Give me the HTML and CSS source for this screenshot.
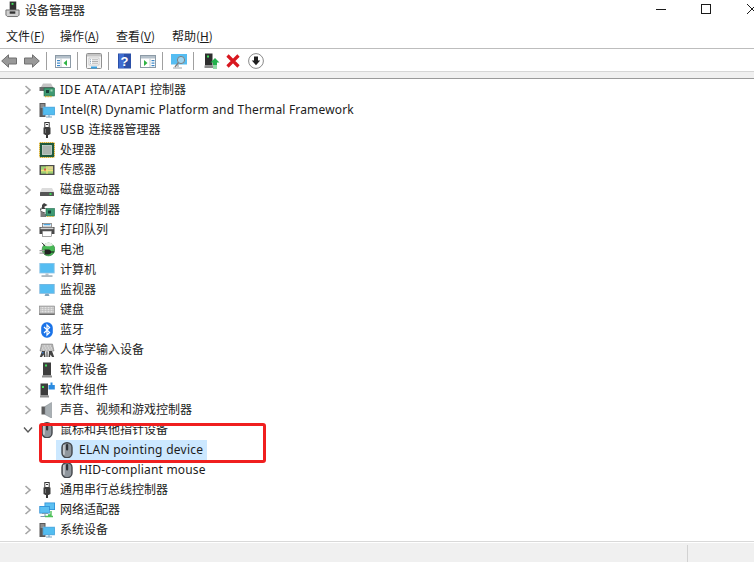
FILE: index.html
```html
<!DOCTYPE html>
<html lang="zh-CN">
<head>
<meta charset="utf-8">
<title>设备管理器</title>
<link rel="stylesheet" href="styles.css">
</head>
<body>
<svg class="defs" width="0" height="0" aria-hidden="true">
  <defs>
    <symbol id="i-chev" viewBox="0 0 8 10"><path d="M1.5 1 L6 5 L1.5 9" fill="none" stroke="#a6a6a6" stroke-width="1.6"/></symbol>
    <symbol id="i-chev-open" viewBox="0 0 10 8"><path d="M1 1.5 L5 6 L9 1.5" fill="none" stroke="#595959" stroke-width="1.4"/></symbol>
    <symbol id="i-ide" viewBox="0 0 16 16"><path d="M2 5 L4 1.5 H12 L14 5 Z" fill="#c4c4c4"/><rect x="0.5" y="5" width="14" height="4" fill="#6a6a6a"/><rect x="5" y="6" width="10.5" height="8" fill="#3e9a72" stroke="#1f6b4c" stroke-width=".6"/><rect x="7" y="8" width="3" height="3" fill="#17443a"/><rect x="11.5" y="7.5" width="2" height="2" fill="#a4d8b8"/><path d="M6 14.5 H13" stroke="#d8b030" stroke-width="1.4" stroke-dasharray="1 .6"/></symbol>
    <symbol id="i-sys" viewBox="0 0 16 16"><rect x="0.5" y="1" width="6" height="14" fill="#5a5a5a"/><rect x="1.5" y="2.5" width="4" height="1" fill="#bdbdbd"/><rect x="1.5" y="4.5" width="4" height="1" fill="#bdbdbd"/><rect x="4" y="5" width="12" height="8" fill="#3fa7e0" stroke="#7fbfe6" stroke-width=".6"/><rect x="5" y="6" width="10" height="6" fill="#52bdf0"/><path d="M7 15 H13 M10 13 V15" stroke="#7ba6c2" stroke-width="1.2"/></symbol>
    <symbol id="i-usb" viewBox="0 0 16 16"><rect x="5.8" y="0.5" width="4.4" height="5" fill="#fff" stroke="#3a3a3a"/><rect x="7" y="2" width="2" height="1" fill="#3a3a3a"/><path d="M4.5 5.5 H11.5 V12 L9.5 13 H6.5 L4.5 12 Z" fill="#3c3c3c"/><rect x="7" y="13" width="2" height="3" fill="#333"/><rect x="6" y="7" width="1" height="4" fill="#777"/></symbol>
    <symbol id="i-cpu" viewBox="0 0 16 16"><rect x="0.5" y="0.5" width="15" height="15" fill="#c9a531"/><rect x="1" y="1" width="14" height="14" fill="#1f5a3e"/><rect x="3.5" y="3.5" width="9" height="9" fill="#aab4af" stroke="#dfe4e1" stroke-width=".7"/><path d="M.5 1V15M15.5 1V15M1 .5H15M1 15.5H15" stroke="#d8b030" stroke-width="1" stroke-dasharray="1 1"/></symbol>
    <symbol id="i-sensor" viewBox="0 0 16 16"><rect x="0.5" y="3" width="15" height="10" fill="#4d4d4d"/><rect x="2" y="4.3" width="12" height="7.4" fill="#9fcf74"/><path d="M2 8.5 H14 M8 4.3 V11.7" stroke="#f2e27a" stroke-width="1.3"/><rect x="9" y="4.3" width="5" height="3.2" fill="#dfd28f"/><rect x="5" y="6.5" width="2" height="2" fill="#d9534f"/></symbol>
    <symbol id="i-disk" viewBox="0 0 16 16"><path d="M3 6 H13 L15 10 H1 Z" fill="#dcdcdc"/><rect x="1" y="10" width="14" height="4" rx=".5" fill="#555"/><rect x="10.5" y="11" width="2" height="2" fill="#39d353"/></symbol>
    <symbol id="i-storage" viewBox="0 0 16 16"><path d="M5 1 L8.5 3 L5 5 L7 7 H3 V3 Z M1 7 L3 5 L2 9 L7 11 H5 V14 H3 Z" fill="#404040"/><path d="M1.5 9 L7 12 V15 H1.5 Z" fill="#7a7a7a"/><rect x="7" y="6.5" width="8.5" height="7.5" fill="#3e9a72" stroke="#1f6b4c" stroke-width=".6"/><rect x="9" y="8.5" width="3" height="3" fill="#17443a"/><path d="M8 14.5 H15" stroke="#d8b030" stroke-width="1.2" stroke-dasharray="1 .6"/></symbol>
    <symbol id="i-printer" viewBox="0 0 16 16"><rect x="3.5" y="1.5" width="9" height="3.5" fill="#fff" stroke="#555" stroke-width=".6"/><path d="M4.5 2.7 H11.5" stroke="#3a9ad9" stroke-width="1.2"/><path d="M.5 5 H15.5 V12 H12.5 V9 H3.5 V12 H.5 Z" fill="#4a4a4a"/><rect x="1.5" y="5.6" width="13" height="1.6" fill="#d0d0d0"/><rect x="3.5" y="9" width="9" height="5.5" fill="#fff" stroke="#666" stroke-width=".6"/></symbol>
    <symbol id="i-battery" viewBox="0 0 16 16"><circle cx="9.5" cy="7.5" r="6.4" fill="#46b854" stroke="#2f7a3a" stroke-width=".6"/><path d="M4.5 3 C7 4.8 12 4.8 14.5 3 L12 1 H7 Z" fill="#e8efe7"/><path d="M3 .8 L6 4" stroke="#333" stroke-width="1"/><path d="M5.5 7.5 H9.5 A2.5 2.5 0 0 1 9.5 12.5 H5.5 Z" fill="#222"/><path d="M0.5 8.7 H5.5 M0.5 11.2 H5.5" stroke="#9a9a9a" stroke-width="1.2"/><path d="M11 10 H15" stroke="#222" stroke-width="1.2"/></symbol>
    <symbol id="i-computer" viewBox="0 0 16 16"><rect x="0.3" y="1" width="15.4" height="10.4" fill="#8fc6e8"/><rect x="1.2" y="1.8" width="13.6" height="8.8" fill="#55bdf2"/><rect x="6.5" y="11.4" width="3" height="2" fill="#b8c4cc"/><rect x="2.5" y="13.4" width="11" height="1.3" fill="#8a9aa6"/></symbol>
    <symbol id="i-monitor" viewBox="0 0 16 16"><rect x="0.3" y="2" width="15.4" height="9.8" fill="#7ab6dd"/><rect x="1.2" y="2.8" width="13.6" height="8.2" fill="#55bdf2"/><path d="M6.5 11.8 H9.5 L10.5 14 H5.5 Z" fill="#7fa3bb"/></symbol>
    <symbol id="i-keyboard" viewBox="0 0 16 16"><rect x="0.3" y="4" width="15.4" height="8.5" fill="#bcbcbc" stroke="#7c7c7c" stroke-width=".5"/><path d="M1.5 5.7 H14.5 M1.5 7.7 H14.5 M1.5 9.7 H14.5" stroke="#f0f0f0" stroke-width="1.1" stroke-dasharray="1 .5"/><rect x="0.3" y="11.6" width="15.4" height="1.2" fill="#5e5e5e"/></symbol>
    <symbol id="i-bt" viewBox="0 0 16 16"><rect x="2.2" y="0.3" width="11.6" height="15.4" rx="5.4" fill="#1a73e8"/><path d="M5 5 L10.6 10.4 L8 13 V3 L10.6 5.6 L5 11" fill="none" stroke="#fff" stroke-width="1.2"/></symbol>
    <symbol id="i-hid" viewBox="0 0 16 16"><path d="M2.5 2 H13.5 L15 9 H1 Z" fill="#b4b4b4" stroke="#6e6e6e" stroke-width=".5"/><path d="M3.5 4 H12.5 M3 6 H13 M2.5 8 H13.5" stroke="#f0f0f0" stroke-width="1" stroke-dasharray="1 .5"/><path d="M3 9 H6 L6.5 15 H5 L4.5 12.5 L3 15 H.8 Z" fill="#444"/><rect x="3" y="10" width="1.5" height="1.5" fill="#3a76c4"/><path d="M10 9 H13 L15.2 15 H13 L11.5 12.5 L11 15 H9.5 Z" fill="#444"/><rect x="7.2" y="9.5" width="1.6" height="5.5" fill="#7b7b7b"/></symbol>
    <symbol id="i-softdev" viewBox="0 0 16 16"><rect x="4" y="0.5" width="8" height="13" fill="#3d3d3d"/><rect x="6" y="2.5" width="2" height="2" fill="#3fe05a"/><rect x="3" y="13.5" width="10" height="2" fill="#8f8f8f"/></symbol>
    <symbol id="i-softcomp" viewBox="0 0 16 16"><rect x="1.5" y="1.5" width="7.5" height="12" fill="#3d3d3d"/><rect x="3" y="4" width="2" height="2" fill="#3fe05a"/><rect x="1" y="13.5" width="9" height="2" fill="#8f8f8f"/><path d="M9.5 3 H11.5 V.5 H13.5 V3 H15.8 V7.5 H9.5 Z" fill="#2b8be0"/></symbol>
    <symbol id="i-sound" viewBox="0 0 16 16"><rect x="2.5" y="4.5" width="4" height="8" fill="#5c5c5c"/><path d="M6 4.5 L12.5 .5 V16 L6 12.5 Z" fill="#a9b0b4" stroke="#7c8388" stroke-width=".5"/></symbol>
    <symbol id="i-mouse" viewBox="0 0 16 16"><rect x="3" y="0.7" width="10" height="15" rx="4.8" fill="#8f969d" stroke="#43474c" stroke-width="1.4"/><rect x="4.3" y="2.8" width="1.3" height="10" rx=".6" fill="#d7dadd"/><rect x="7" y="2" width="2.2" height="6.5" rx="1" fill="#2f3338"/></symbol>
    <symbol id="i-net" viewBox="0 0 16 16"><rect x="5.5" y="0.5" width="10.5" height="7.5" fill="#2d8fd5"/><rect x="6.3" y="1.3" width="8.9" height="5.9" fill="#5cc0f2"/><rect x="0.3" y="4" width="10.5" height="7.5" fill="#2d8fd5"/><rect x="1.1" y="4.8" width="8.9" height="5.9" fill="#5cc0f2"/><path d="M3 11.5 H9 M6 11.5 V14 M1.5 14.5 H10" stroke="#7a9cb2" stroke-width="1"/><path d="M12 9 V13 H9 M6 14.5 H14" stroke="#4fc05a" stroke-width="1.4" fill="none"/></symbol>
  </defs>
</svg>

<div class="window">
  <header class="titlebar">
    <svg class="title-icon" viewBox="0 0 16 18"><rect x="5" y="0.5" width="7" height="9" fill="#303030"/><rect x="7" y="2" width="2" height="2" fill="#3fe05a"/><path d="M1 9.5 H15 V15 L13.5 16.5 H2.5 L1 15 Z" fill="#cfcfcf" stroke="#6b6b6b"/><rect x="5" y="11" width="6" height="2.5" fill="#333"/></svg>
    <span class="title-text">设备管理器</span>
    <div class="controls">
      <svg class="ctl ctl-min" viewBox="0 0 10 10"><path d="M0 5.5 H10" stroke="#1a1a1a"/></svg>
      <svg class="ctl ctl-max" viewBox="0 0 10 10"><rect x=".5" y=".5" width="9" height="9" fill="none" stroke="#1a1a1a"/></svg>
      <svg class="ctl ctl-close" viewBox="0 0 10 10"><path d="M0 0 L10 10 M10 0 L0 10" stroke="#1a1a1a"/></svg>
    </div>
  </header>

  <nav class="menubar">
    <span class="menu">文件(<u>F</u>)</span>
    <span class="menu">操作(<u>A</u>)</span>
    <span class="menu">查看(<u>V</u>)</span>
    <span class="menu">帮助(<u>H</u>)</span>
  </nav>

  <div class="toolbar">
    <svg class="tb" viewBox="0 0 16 16"><path d="M.7 8 L7.5 1.8 V5 H15.5 V11 H7.5 V14.2 Z" fill="#999" stroke="#707070"/></svg>
    <svg class="tb" viewBox="0 0 16 16"><path d="M15.3 8 L8.5 1.8 V5 H.5 V11 H8.5 V14.2 Z" fill="#999" stroke="#707070"/></svg>
    <span class="sep"></span>
    <svg class="tb" viewBox="0 0 16 16"><rect x=".5" y="2.5" width="15" height="12" fill="#fff" stroke="#8c9aa6"/><rect x="1" y="3" width="14" height="2.5" fill="#b4c0ca"/><rect x="2" y="7" width="3" height="1.2" fill="#3a86c8"/><rect x="2" y="9.5" width="3" height="1.2" fill="#3a86c8"/><rect x="2" y="12" width="3" height="1.2" fill="#3a86c8"/><path d="M6 5.5 V14" stroke="#c2cad0"/><path d="M12 7 V13 L8.5 10 Z" fill="#2fb344"/></svg>
    <span class="sep"></span>
    <svg class="tb" viewBox="0 0 16 16"><rect x=".5" y=".5" width="15" height="15" rx="1" fill="#f4f4f4" stroke="#909090"/><rect x="1" y="1" width="14" height="2.5" fill="#c4c4c4"/><rect x="3" y="5" width="10" height="7" fill="#fff" stroke="#b0b0b0" stroke-width=".6"/><path d="M6 6.8 H12 M6 8.5 H12 M6 10.2 H12" stroke="#9a9a9a" stroke-width=".8"/><path d="M4 6.8 H5 M4 8.5 H5 M4 10.2 H5" stroke="#6a8aa8" stroke-width=".8"/><rect x="5" y="13.5" width="6" height="2" fill="#38a0e0"/></svg>
    <span class="sep"></span>
    <svg class="tb" viewBox="0 0 16 16"><rect x="1" y=".5" width="13" height="15" fill="#2b50a8"/><rect x="2" y="1" width="5" height="14" fill="#3f6cd0"/><text class="q" x="7.5" y="12.5" text-anchor="middle">?</text></svg>
    <svg class="tb" viewBox="0 0 16 16"><rect x=".5" y="2.5" width="15" height="12" fill="#fff" stroke="#8c9aa6"/><rect x="1" y="3" width="14" height="2.5" fill="#b4c0ca"/><path d="M4 7 V13 L7.5 10 Z" fill="#2fb344"/><path d="M10 5.5 V14" stroke="#c2cad0"/><rect x="11.5" y="7" width="3" height="1.2" fill="#3a86c8"/><rect x="11.5" y="9.5" width="3" height="1.2" fill="#3a86c8"/><rect x="11.5" y="12" width="3" height="1.2" fill="#3a86c8"/></svg>
    <span class="sep"></span>
    <svg class="tb" viewBox="0 0 16 16"><rect x="0" y="1" width="16" height="10.5" fill="#55bdf2"/><path d="M7 11.5 V14 M2 15 H11" stroke="#9aa4aa" stroke-width="1.2"/><circle cx="10" cy="7" r="3.6" fill="#9fd4ee" stroke="#808080"/><path d="M7.5 9.5 L4 14" stroke="#808080" stroke-width="1.4"/></svg>
    <span class="sep"></span>
    <svg class="tb tb-gap1" viewBox="0 0 16 16"><rect x="1" y=".5" width="7.5" height="12" fill="#2e2e2e"/><rect x="3" y="2.5" width="2" height="2" fill="#3fe05a"/><rect x=".5" y="12.5" width="8.5" height="2.5" fill="#8a8a8a"/><path d="M11 5 L15.5 9.5 H13 V12 H9 V9.5 H6.5 Z" fill="#22b14c"/><path d="M9 13 H13 M9 15 H13" stroke="#22b14c" stroke-width="1.1"/></svg>
    <svg class="tb" viewBox="0 0 16 16"><path d="M2.5 2.5 L13.5 13.5 M13.5 2.5 L2.5 13.5" stroke="#d8171f" stroke-width="3.2"/></svg>
    <svg class="tb" viewBox="0 0 16 16"><circle cx="8" cy="8" r="7.4" fill="#fff" stroke="#8a8a8a"/><path d="M6 3.5 H10 V7.5 H12.2 L8 12.2 L3.8 7.5 H6 Z" fill="#1f1f1f"/></svg>
  </div>
  <div class="strip"></div>

  <main class="tree">
    <div class="row"><svg class="chev"><use href="#i-chev"/></svg><svg class="ic"><use href="#i-ide"/></svg><span class="lbl"><span class="en-wide">IDE ATA/ATAPI </span>控制器</span></div>
    <div class="row"><svg class="chev"><use href="#i-chev"/></svg><svg class="ic"><use href="#i-sys"/></svg><span class="lbl en">Intel(R) Dynamic Platform and Thermal Framework</span></div>
    <div class="row"><svg class="chev"><use href="#i-chev"/></svg><svg class="ic"><use href="#i-usb"/></svg><span class="lbl"><span class="en-wide">USB </span>连接器管理器</span></div>
    <div class="row"><svg class="chev"><use href="#i-chev"/></svg><svg class="ic"><use href="#i-cpu"/></svg><span class="lbl">处理器</span></div>
    <div class="row"><svg class="chev"><use href="#i-chev"/></svg><svg class="ic"><use href="#i-sensor"/></svg><span class="lbl">传感器</span></div>
    <div class="row"><svg class="chev"><use href="#i-chev"/></svg><svg class="ic"><use href="#i-disk"/></svg><span class="lbl">磁盘驱动器</span></div>
    <div class="row"><svg class="chev"><use href="#i-chev"/></svg><svg class="ic"><use href="#i-storage"/></svg><span class="lbl">存储控制器</span></div>
    <div class="row"><svg class="chev"><use href="#i-chev"/></svg><svg class="ic"><use href="#i-printer"/></svg><span class="lbl">打印队列</span></div>
    <div class="row"><svg class="chev"><use href="#i-chev"/></svg><svg class="ic"><use href="#i-battery"/></svg><span class="lbl">电池</span></div>
    <div class="row"><svg class="chev"><use href="#i-chev"/></svg><svg class="ic"><use href="#i-computer"/></svg><span class="lbl">计算机</span></div>
    <div class="row"><svg class="chev"><use href="#i-chev"/></svg><svg class="ic"><use href="#i-monitor"/></svg><span class="lbl">监视器</span></div>
    <div class="row"><svg class="chev"><use href="#i-chev"/></svg><svg class="ic"><use href="#i-keyboard"/></svg><span class="lbl">键盘</span></div>
    <div class="row"><svg class="chev"><use href="#i-chev"/></svg><svg class="ic"><use href="#i-bt"/></svg><span class="lbl">蓝牙</span></div>
    <div class="row"><svg class="chev"><use href="#i-chev"/></svg><svg class="ic"><use href="#i-hid"/></svg><span class="lbl">人体学输入设备</span></div>
    <div class="row"><svg class="chev"><use href="#i-chev"/></svg><svg class="ic"><use href="#i-softdev"/></svg><span class="lbl">软件设备</span></div>
    <div class="row"><svg class="chev"><use href="#i-chev"/></svg><svg class="ic"><use href="#i-softcomp"/></svg><span class="lbl">软件组件</span></div>
    <div class="row"><svg class="chev"><use href="#i-chev"/></svg><svg class="ic"><use href="#i-sound"/></svg><span class="lbl">声音、视频和游戏控制器</span></div>
    <div class="row"><svg class="chev chev-open"><use href="#i-chev-open"/></svg><svg class="ic"><use href="#i-mouse"/></svg><span class="lbl">鼠标和其他指针设备</span></div>
    <div class="row child"><div class="sel"><svg class="ic"><use href="#i-mouse"/></svg><span class="lbl en-elan">ELAN pointing device</span></div></div>
    <div class="row child"><div class="nosel"><svg class="ic"><use href="#i-mouse"/></svg><span class="lbl en">HID-compliant mouse</span></div></div>
    <div class="row"><svg class="chev"><use href="#i-chev"/></svg><svg class="ic"><use href="#i-usb"/></svg><span class="lbl">通用串行总线控制器</span></div>
    <div class="row"><svg class="chev"><use href="#i-chev"/></svg><svg class="ic"><use href="#i-net"/></svg><span class="lbl">网络适配器</span></div>
    <div class="row"><svg class="chev"><use href="#i-chev"/></svg><svg class="ic"><use href="#i-sys"/></svg><span class="lbl">系统设备</span></div>
  </main>

  <footer class="statusbar"><span class="status-div"></span></footer>

  <div class="callout"></div>
</div>
</body>
</html>
```

FILE: styles.css
```css
* { box-sizing: border-box; }
html, body { margin: 0; padding: 0; background: #fff; }
.defs { position: absolute; }
.window {
  position: relative;
  width: 754px;
  height: 562px;
  overflow: hidden;
  display: flex;
  flex-direction: column;
  font-family: "Noto Sans", "Noto Sans CJK SC", sans-serif;
  font-size: 12px;
  color: #1a1a1a;
  background: #fff;
}
.titlebar {
  height: 19px;
  display: flex;
  align-items: center;
  padding-left: 5px;
  flex: none;
}
.title-icon { width: 15px; height: 17px; margin-right: 5px; }
.title-text { font-family: "Noto Sans CJK SC", sans-serif; line-height: 18px; }
.controls { margin-left: auto; display: flex; align-items: center; height: 19px; padding-bottom: 1px; }
.ctl { width: 10px; height: 10px; }
.ctl-max { margin-left: 35px; }
.ctl-close { margin-left: 36px; margin-right: -3px; flex: none; }
.menubar {
  height: 30px;
  flex: none;
  display: flex;
  align-items: center;
  padding: 5px 0 0 6px;
  border-bottom: 1px solid #bdbdbd;
  font-family: "Noto Sans CJK SC", sans-serif;
}
.menu { line-height: 18px; width: 56px; flex: none; }
.menu:first-child { width: 54px; }
.menu u { text-underline-offset: 1px; }
.toolbar {
  height: 23px;
  flex: none;
  display: flex;
  align-items: center;
  gap: 7px;
  padding: 2px 0 0 1px;
  border-bottom: 1px solid #d6d6d6;
}
.tb { width: 16px; height: 16px; flex: none; }
.tb-gap1 { margin-left: 2px; margin-right: -2px; }
.q { font-family: "Liberation Sans", sans-serif; font-size: 13px; font-weight: 700; fill: #fff; }
.sep { width: 1px; height: 18px; background: #a0a0a0; margin: 0 1px 0 -1px; flex: none; }
.strip {
  height: 7px;
  flex: none;
  background: #f0f0f0;
  border-bottom: 1px solid #9a9a9a;
}
.tree { flex: 1; min-height: 0; padding-top: 1px; }
.row {
  height: 20px;
  display: flex;
  align-items: center;
  padding-left: 24px;
  white-space: nowrap;
}
.chev { width: 8px; height: 10px; margin-right: 7px; flex: none; }
.chev-open { width: 10px; height: 8px; margin-left: -1px; margin-right: 6px; }
.ic { width: 16px; height: 16px; flex: none; margin-right: 5px; }
.lbl { font-size: 12px; line-height: 20px; color: #1c1c1c; }
.en { letter-spacing: 0.17px; }
.en-elan { letter-spacing: 0.27px; }
.en-wide { letter-spacing: 0.55px; }
.row.child { padding-left: 56px; }
.sel, .nosel { display: flex; align-items: center; height: 20px; padding-left: 3px; padding-right: 4px; }
.sel { background: #cce8ff; }
.child .ic { margin-right: 4px; }
.statusbar {
  height: 21px;
  flex: none;
  background: #f0f0f0;
  border-top: 1px solid #d9d9d9;
  box-shadow: inset 0 1px 0 #fff;
  position: relative;
  display: flex;
  justify-content: flex-end;
  padding: 3px 66px 0 0;
}
.status-div { width: 1px; height: 18px; background: #d2d2d2; }
.callout {
  position: absolute;
  left: 39px;
  top: 423px;
  width: 227px;
  height: 40px;
  border: 3px solid #f01f1f;
  border-radius: 3px;
}
```
